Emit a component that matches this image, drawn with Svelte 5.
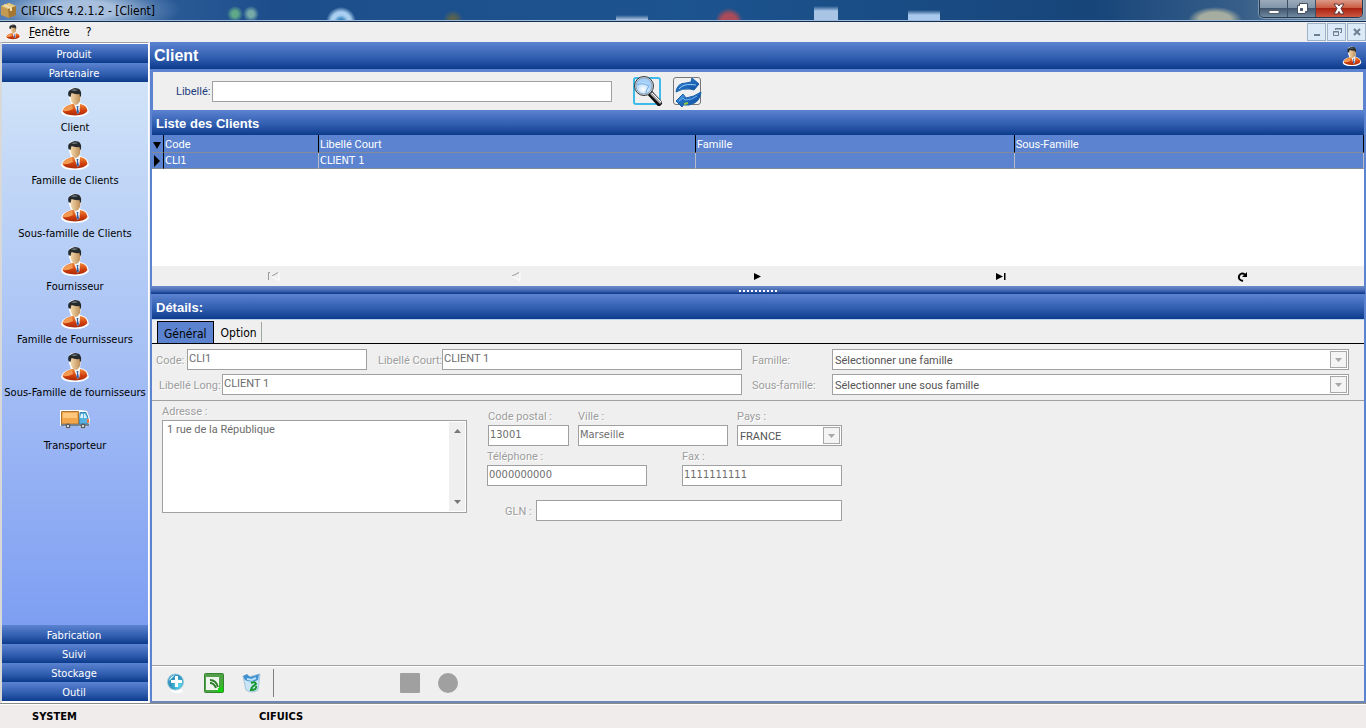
<script>
  const partners = [
    'Client',
    'Famille de Clients',
    'Sous-famille de Clients',
    'Fournisseur',
    'Famille de Fournisseurs',
    'Sous-Famille de fournisseurs',
    'Transporteur'
  ];
  const lowerGroups = ['Fabrication', 'Suivi', 'Stockage', 'Outil'];
  let search = $state('');
  let tab = $state('Général');
</script>

{#snippet person(size)}
  <svg width={size} height={size} viewBox="0 0 30 30" aria-hidden="true">
    <path d="M9 3Q15-2 21 4L21 9 20 16Q28 17 29 25Q26 30 15 30Q2 30 1 25Q2 19 11 17L9 11Z" fill="#fff" />
    <path d="M2.500 24Q4 19 12 17L20 17Q27 18 27.500 24Q25 28 15 28.500Q4 28 2.500 24Z" fill="url(#coat)" />
    <path d="M3 23Q5 19 12 18L13 22Q7 25 3 24Z" fill="#f29a52" />
    <path d="M14 17L20 17 19.500 25 17.500 27Z" fill="#f4f7fb" />
    <path d="M16.500 19L18.500 19 18 21 19 25 18 27 16.500 25 17 21Z" fill="#3262a8" />
    <path d="M10 6Q10 2 16 2Q21 3 20.500 9L20 14Q18 18 15.500 18Q12 17 11 13Z" fill="url(#skin)" />
    <path d="M8.500 9Q7 4 11 2.500Q14 0 18 1.500Q22 3 21 9L20 10 19.500 7Q15 7.500 11.500 6L10.500 10Z" fill="#252a2d" />
    <path d="M11 3.500Q14 1.500 18 3Q15 4.500 11 3.500Z" fill="#6c7478" />
  </svg>
{/snippet}

{#snippet truck()}
  <svg width="30" height="30" viewBox="0 0 30 30" aria-hidden="true">
    <path d="M0 5H20L27 6 30 14 29 21H27L23 24 19 21H11L8 24 4 21H0Z" fill="#fff" />
    <path d="M1.500 6.500H18.500V19H1.500Z" fill="#f3a54c" stroke="#a97637" />
    <path d="M3 8H17V13H3Z" fill="#ffc77e" />
    <path d="M20 7.500H26L28 13V19H19.500Z" fill="#58b2e1" stroke="#3987b7" />
    <path d="M21 9H23V13H20ZM24 9H25L27 13H24Z" fill="#dbf5ff" />
    <path d="M1 20H29" stroke="#77818a" stroke-width="2" />
    <circle cx="8" cy="21" r="2.500" fill="#555e64" /><circle cx="8" cy="21" r="1" fill="#fff" />
    <circle cx="23" cy="21" r="2.500" fill="#555e64" /><circle cx="23" cy="21" r="1" fill="#fff" />
    <path d="M28 14V18" stroke="#f37945" stroke-width="2" />
  </svg>
{/snippet}

{#snippet combo(id, value)}
  <span class="combo">
    <select {id} disabled><option>{value}</option></select>
    <span class="drop"><svg width="7" height="4" viewBox="0 0 7 4"><path d="M0 0H7L3.500 4Z" fill="#a8a8a8" /></svg></span>
  </span>
{/snippet}

<svg class="defs" width="0" height="0" aria-hidden="true">
  <defs>
    <linearGradient id="coat" x1="0" y1="0" x2="0" y2="1"><stop stop-color="#f08a3c" /><stop offset=".6" stop-color="#cf3d0c" /><stop offset="1" stop-color="#a82a08" /></linearGradient>
    <linearGradient id="skin"><stop stop-color="#f8dcae" /><stop offset="1" stop-color="#bd8d58" /></linearGradient>
    <linearGradient id="blue" x1="0" y1="0" x2="1" y2="1"><stop stop-color="#7cc4f0" /><stop offset=".4" stop-color="#2470c4" /><stop offset="1" stop-color="#0c4594" /></linearGradient>
    <radialGradient id="lens" cx=".45" cy=".7"><stop stop-color="#fff" /><stop offset="1" stop-color="#a5cff8" /></radialGradient>
    <radialGradient id="orb" cx=".7" cy=".7"><stop stop-color="#5bdcf3" /><stop offset="1" stop-color="#2f93bd" /></radialGradient>
    <linearGradient id="leaf" x1="0" y1="0" x2="1" y2="1"><stop stop-color="#5b9c52" /><stop offset=".6" stop-color="#4ca344" /><stop offset="1" stop-color="#12d60a" /></linearGradient>
  </defs>
</svg>

<div class="window">
  <header class="titlebar">
    <svg class="box" width="17" height="17" viewBox="0 0 17 17" aria-hidden="true">
      <path d="M1 4L9 1 16 4V13L9 16 1 13Z" fill="#c49a50" /><path d="M1 4L9 1 16 4 8 7Z" fill="#e5ca84" /><path d="M8 7L16 4V13L9 16Z" fill="#a37731" /><path d="M4 3L11 6V9" fill="none" stroke="#f0dca6" stroke-width="2" />
    </svg>
    <span class="caption">CIFUICS 4.2.1.2 - [Client]</span>
    <div class="controls">
      <button aria-label="Réduire"><svg width="12" height="13" viewBox="0 0 12 13"><path d="M1 8.500H11V11.500H1Z" fill="#fff" stroke="#56616d" /></svg></button>
      <button aria-label="Restaurer"><svg width="12" height="13" viewBox="0 0 12 13"><path d="M3.500 1.500H11.500V9.500H9.500V11.500H1.500V3.500H3.500Z" fill="#fff" stroke="#46515f" /><path d="M4.500 6.500H6.500V8.500H4.500Z" fill="#4a6280" stroke="#46515f" /></svg></button>
      <button class="close" aria-label="Fermer"><svg width="14" height="12" viewBox="0 0 14 12"><path d="M2 1H5.500L7 3 8.500 1H12L9 5.500 12 11H8.500L7 8.500 5.500 11H2L5 5.500Z" fill="#fff" stroke="#5d3535" /></svg></button>
    </div>
  </header>

  <nav class="menubar" aria-label="Menu">
    {@render person(16)}
    <button><u>F</u>enêtre</button>
    <button>?</button>
    <div class="mdi">
      <button aria-label="Réduire la fiche"><svg width="10" height="10" viewBox="0 0 10 10"><path d="M2 7H8V9H2Z" fill="#6e7f91" /></svg></button>
      <button aria-label="Restaurer la fiche"><svg width="10" height="10" viewBox="0 0 10 10"><path d="M3.500 3V1.500H9.500V5.500H8M3 2H10" fill="none" stroke="#6e7f91" /><path d="M1.500 4.500H6.500V8.500H1.500ZM1 5H7" fill="none" stroke="#6e7f91" /></svg></button>
      <button aria-label="Fermer la fiche"><svg width="10" height="10" viewBox="0 0 10 10"><path d="M2 2L8 8M8 2L2 8" stroke="#6e7f91" stroke-width="2" /></svg></button>
    </div>
  </nav>

  <div class="body">
    <aside>
      <button class="group">Produit</button>
      <button class="group">Partenaire</button>
      <div class="items">
        {#each partners as name}
          <button class="item">
            {#if name === 'Transporteur'}{@render truck()}{:else}{@render person(30)}{/if}
            <span>{name}</span>
          </button>
        {/each}
      </div>
      {#each lowerGroups as name}
        <button class="group">{name}</button>
      {/each}
    </aside>

    <main>
      <div class="heading">
        <h1>Client</h1>
        {@render person(20)}
      </div>

      <form class="filter" onsubmit={(e) => e.preventDefault()}>
        <label for="search">Libellé:</label>
        <input id="search" bind:value={search} />
        <button class="find" aria-label="Rechercher">
          <svg width="30" height="30" viewBox="0 0 30 30">
            <path d="M18 17L29 29" stroke="#111" stroke-width="6" />
            <path d="M19 17L29 27" stroke="#a9a9ae" stroke-width="3" />
            <path d="M20 17L29 26" stroke="#fff" />
            <circle cx="12" cy="10" r="9.500" fill="#d7dce2" stroke="#32383d" />
            <circle cx="12" cy="10" r="8" fill="url(#lens)" stroke="#8fa6ba" />
            <path d="M5 9Q10 6 17 10Q14 14 14 17" fill="none" stroke="#6eaee9" />
          </svg>
        </button>
        <button aria-label="Actualiser">
          <svg width="28" height="30" viewBox="0 0 28 30">
            <path d="M2 14Q3 5 12 5L17 4 18 0 25 6 20 12 16 11Q8 10 2 14Z" fill="url(#blue)" stroke="#1860a9" />
            <path d="M5 11Q9 6 17 6.500L22 7" fill="none" stroke="#8fcdf5" />
            <path d="M27 14Q26 25 15 27L9 27 8 29 2 23 9 16 12 20Q20 19 27 14Z" fill="url(#blue)" stroke="#1860a9" />
            <path d="M5 23L9 20 11 22Q18 22 23 18" fill="none" stroke="#6fb4ea" />
            <path d="M10 26L14 25" stroke="#8dc83d" stroke-width="2" />
          </svg>
        </button>
      </form>

      <section class="list">
        <h2>Liste des Clients</h2>
        <div class="grid">
          <table>
            <colgroup><col class="mark" /><col class="code" /><col class="short" /><col class="family" /><col /></colgroup>
            <thead>
              <tr>
                <th><svg width="8" height="8" viewBox="0 0 8 8"><path d="M0 1H8L4 8Z" /></svg></th>
                <th>Code</th><th>Libellé Court</th><th>Famille</th><th>Sous-Famille</th>
              </tr>
            </thead>
            <tbody>
              <tr>
                <td><svg width="8" height="12" viewBox="0 0 8 12"><path d="M1 0L7 6 1 12Z" /></svg></td>
                <td>CLI1</td><td>CLIENT 1</td><td></td><td></td>
              </tr>
            </tbody>
          </table>
        </div>
        <div class="pager">
          <button disabled aria-label="Premier"><svg width="13" height="9" viewBox="0 0 13 9"><path d="M3 .5H1.500V8M11 .5L5 4" fill="none" stroke="#999" /><path d="M5 4.500L12 8.500V1" fill="none" stroke="#fff" /></svg></button>
          <button disabled aria-label="Précédent"><svg width="13" height="9" viewBox="0 0 13 9"><path d="M10 .5L3 4" fill="none" stroke="#999" /><path d="M3 4.500L11 8.500V1" fill="none" stroke="#fff" /></svg></button>
          <button aria-label="Suivant"><svg width="13" height="9" viewBox="0 0 13 9"><path d="M3 1L10 4.500 3 8Z" /></svg></button>
          <button aria-label="Dernier"><svg width="13" height="9" viewBox="0 0 13 9"><path d="M2 1L9 4.500 2 8ZM10 1H11.500V8H10Z" /></svg></button>
          <button aria-label="Rafraîchir"><svg width="11" height="11" viewBox="0 0 11 11"><path d="M6 10Q1 9 2 5Q4 1 8 3.500" fill="none" stroke="#000" stroke-width="2" /><path d="M10 1V6H5Z" /></svg></button>
        </div>
      </section>

      <div class="splitter"><span></span></div>

      <section class="details">
        <h2>Détails:</h2>
        <div class="tabs" role="tablist">
          {#each ['Général', 'Option'] as name}
            <button role="tab" aria-selected={tab === name} class:active={tab === name} onclick={() => (tab = name)}>{name}</button>
          {/each}
        </div>

        <div class="identity">
          <div class="names">
            <div class="line">
              <label for="code">Code:</label>
              <input id="code" class="codebox" value="CLI1" disabled />
              <label class="second" for="short">Libellé Court:</label>
              <input id="short" class="grow" value="CLIENT 1" disabled />
            </div>
            <div class="line">
              <label class="indent" for="long">Libellé Long:</label>
              <input id="long" class="grow" value="CLIENT 1" disabled />
            </div>
          </div>
          <div class="families">
            <label for="family">Famille:</label>
            {@render combo('family', 'Sélectionner une famille')}
            <label for="subfamily">Sous-famille:</label>
            {@render combo('subfamily', 'Sélectionner une sous famille')}
          </div>
        </div>

        <div class="contact">
          <div class="address">
            <label for="address">Adresse :</label>
            <div class="memo">
              <textarea id="address" disabled>1 rue de la République</textarea>
              <div class="scroll">
                <svg width="7" height="4" viewBox="0 0 7 4"><path d="M0 4L3.500 0 7 4Z" fill="#777" /></svg>
                <svg width="7" height="4" viewBox="0 0 7 4"><path d="M0 0L3.500 4 7 0Z" fill="#777" /></svg>
              </div>
            </div>
          </div>
          <div class="place">
            <div class="trio">
              <div><label for="zip">Code postal :</label><input id="zip" class="wide-face" value="13001" disabled /></div>
              <div><label for="city">Ville :</label><input id="city" class="wide-face" value="Marseille" disabled /></div>
              <div><label for="country">Pays :</label>{@render combo('country', 'FRANCE')}</div>
            </div>
            <div class="duo">
              <div><label for="phone">Téléphone :</label><input id="phone" class="wide-face" value="0000000000" disabled /></div>
              <div><label for="fax">Fax :</label><input id="fax" class="wide-face" value="1111111111" disabled /></div>
            </div>
            <div class="gln"><label for="gln">GLN :</label><input id="gln" class="grow" disabled /></div>
          </div>
        </div>

        <div class="toolbar">
          <button aria-label="Ajouter">
            <svg width="20" height="20" viewBox="0 0 20 20"><ellipse cx="11" cy="18" rx="6" ry="2" fill="#fff" /><circle cx="9.500" cy="9" r="8" fill="url(#orb)" stroke="#9ccbd9" /><path d="M9 3H12V7H16V10H12V14H9V10H5V7H9Z" fill="#fff" /><path d="M3 8Q4 3 9 2L5 6Z" fill="#d9f7ff" /></svg>
          </button>
          <button aria-label="Modifier">
            <svg width="20" height="20" viewBox="0 0 20 20"><rect x=".5" y=".5" width="19" height="19" rx="1" fill="url(#leaf)" stroke="#34862e" /><rect x="2" y="4" width="13" height="13" fill="#eff5ed" /><path d="M6 7Q12 7 14 14M6 10Q10 10 12 15" fill="none" stroke="#317e2c" stroke-width="2" /><path d="M14 15H19V19H14Z" fill="#14d50b" /></svg>
          </button>
          <button aria-label="Supprimer">
            <svg width="20" height="20" viewBox="0 0 20 20"><path d="M1 3L5 4 10 3 18 1 16 17Q10 21 4 17Z" fill="#c9e6f7" stroke="#a4c4da" /><path d="M1 3L5 1 8 4 12 3 17 1 16 7Q9 10 3 7Z" fill="#4390cf" /><path d="M5 6L10 7 14 5" fill="none" stroke="#bce2fa" stroke-width="2" /><path d="M9 10Q13 8 14 11L10 14M14 13Q15 17 9 17L10 14" fill="none" stroke="#15972b" stroke-width="2" /></svg>
          </button>
          <span class="rule"></span>
          <button class="stub" disabled aria-label="Enregistrer"><svg width="20" height="20" viewBox="0 0 20 20"><rect width="20" height="20" rx="1" fill="#a0a0a0" /></svg></button>
          <button disabled aria-label="Annuler"><svg width="20" height="20" viewBox="0 0 20 20"><circle cx="10" cy="10" r="10" fill="#a0a0a0" /></svg></button>
        </div>
      </section>
    </main>
  </div>

  <footer><span>SYSTEM</span><span>CIFUICS</span></footer>
</div>

<style>
  :global(body) { margin: 0; }
  * { box-sizing: border-box; }
  .defs { position: absolute; }
  svg { display: block; flex: none; }
  button { font: inherit; color: inherit; border: 0; padding: 0; margin: 0; background: none; }
  h1, h2 { margin: 0; color: #fff; font-family: "Liberation Sans", Arial, sans-serif; }

  .window {
    --bar: linear-gradient(#5b83d1, #2f5cae 60%, #0d3b8c);
    --tahoma: "DejaVu Sans Condensed", Tahoma, sans-serif;
    --sans: Roboto, "Liberation Sans", sans-serif;
    min-height: 100vh;
    display: flex;
    flex-direction: column;
    font: 11px/14px var(--tahoma);
    color: #000;
    background: #efefef;
  }

  .titlebar {
    height: 22px;
    display: flex;
    gap: 4px;
    border-bottom: 1px solid #142c4c;
    box-shadow: inset 0 -1px #9fbbdc;
    background:
      radial-gradient(ellipse 100px 26px at 80px 10px, #b7cce6e0 35%, #8eaed455 75%, transparent),
      radial-gradient(circle at 235px 14px, #5fa988 3px, transparent 8px),
      radial-gradient(circle at 251px 14px, #76aaa9 3px, transparent 8px),
      radial-gradient(circle at 341px 22px, #3a84bd 3px, #a8cff0 7px, #a8cff0 10px, transparent 15px),
      radial-gradient(circle at 453px 20px, #59634f 3px, transparent 10px),
      linear-gradient(#b3c5e000, #b3c5e0 5px) 616px 15px / 32px 12px no-repeat,
      radial-gradient(circle at 729px 22px, #a94b58 8px, transparent 14px),
      linear-gradient(#a9c5e500, #a9c5e5 5px) 814px 6px / 24px 16px no-repeat,
      linear-gradient(#a9c8ed00, #a9c8ed 5px) 908px 10px / 32px 12px no-repeat,
      radial-gradient(ellipse 27px 13px at 1215px 20px, #a4ad9f 60%, transparent),
      linear-gradient(90deg, #416fa8, #1d4e8b 20%, #1c548f 50%, #17457a 80%, #385f89 91%, #8397ac);
  }
  .box { margin-top: 2px; }
  .caption { font-size: 12px; line-height: 22px; }
  .controls { margin-left: auto; margin-right: 3px; display: flex; height: 18px; border: 1px solid #25394f; border-top: 0; border-radius: 0 0 5px 5px; box-shadow: 0 0 0 1px #b9c7d580; overflow: hidden; }
  .controls button { width: 28px; display: grid; place-items: center; border-right: 1px solid #3b4f65; background: linear-gradient(#9cabba, #8195aa 45%, #41566d 50%, #7189a2); }
  .controls .close { width: 46px; border: 0; background: linear-gradient(#dc9a87, #cc5d45 45%, #aa2210 50%, #cc5942); }

  .menubar { height: 20px; display: flex; align-items: center; padding-left: 5px; font-size: 12px; }
  .menubar > button { padding: 0 8px; }
  .mdi { margin-left: auto; display: flex; gap: 1px; }
  .mdi button { width: 19px; height: 18px; display: grid; place-items: center; border: 1px solid #9eb2c8; background: #dce9f7; }

  .body { flex: 1; display: flex; min-height: 0; }
  aside { width: 149px; flex: none; display: flex; flex-direction: column; padding: 1px 0 1px 0; border: 1px solid #fff; border-left: 2px solid #d8d8d8; border-top-color: #a0a0a0; background: #fff; }
  .group { height: 19px; flex: none; padding: 2px 2px 0 0; color: #fff; background: var(--bar); }
  .items { flex: 1; padding-top: 5px; background: linear-gradient(#d0e3f8, #7e9ef2); }
  .item { width: 100%; height: 53px; display: flex; flex-direction: column; align-items: center; gap: 3px; white-space: nowrap; }
  .item span { line-height: 16px; }

  main { flex: 1; min-width: 0; display: flex; flex-direction: column; margin-left: 1px; padding: 0 2px; border-bottom: 2px solid #6c86b8; background: #5b83cf; }
  .heading { height: 27px; margin: 0 -2px; padding: 0 4px; display: flex; align-items: center; justify-content: space-between; background: var(--bar); }
  h1 { font-size: 16px; line-height: 20px; }
  h2 { height: 25px; padding-left: 4px; font-size: 13px; line-height: 27px; background: var(--bar); }

  input, textarea, select { border: 1px solid #a0a0a0; border-radius: 0; background: #fff; color: #6d6d6d; opacity: 1; margin: 0; outline: 0; }
  input, select { height: 21px; }
  input { padding: 0 1px 3px; min-width: 0; }
  label, input, select, textarea, table { font: 11px/14px var(--sans); }
  label { line-height: 16px; }
  .wide-face { font-family: var(--tahoma); }
  .grow { flex: 1; }

  .filter { height: 38px; margin: 3px 1px 0; padding-left: 23px; display: flex; align-items: center; background: #efefef; }
  .filter label { width: 36px; padding-top: 2px; color: #1a3c7c; white-space: nowrap; }
  .filter input { width: 400px; color: #000; }
  .filter button { width: 28px; height: 28px; margin-left: 12px; display: grid; place-items: center; border: 1px solid #777; border-radius: 3px; background: #f0f0f0; }
  .filter .find { margin-left: 21px; border: 2px solid #3ebbe8; place-content: center; }

  .grid { height: 131px; background: #fff; }
  table { width: 100%; table-layout: fixed; border-collapse: separate; border-spacing: 0; color: #fff; background: #5b83cf; }
  .mark { width: 12px; } .code { width: 155px; } .short { width: 31.1%; } .family { width: 26.3%; }
  th, td { padding: 1px 1px 0; text-align: left; font-weight: 400; border-right: 1px solid #000; border-bottom: 1px solid #858b99; white-space: nowrap; }
  th { height: 18px; padding-top: 2px; } td { height: 15px; line-height: 14px; font-family: var(--tahoma); }
  td + td { border-right-color: #b8bdc6; }
  .pager { height: 20px; display: grid; grid-template-columns: repeat(5, 1fr); background: #efefef; }
  .pager button { display: grid; place-items: center; }
  .splitter { height: 8px; margin: 0 -1px; padding-top: 4px; background: linear-gradient(#6f8cc9, #4569b4 55%, #0c3889); }
  .splitter span { display: block; width: 38px; height: 2px; margin: auto; background: repeating-linear-gradient(90deg, #fff 0 2px, transparent 2px 4px); }

  .details { flex: 1; display: flex; flex-direction: column; background: #efefef; }
  .tabs { height: 25px; padding: 1px 0 0 5px; display: flex; border-top: 1px solid #b9d2f0; border-bottom: 1px solid #000; font-size: 12px; }
  .tabs button { padding: 2px 6px 0; }
  .tabs button:last-child { height: 20px; align-self: center; border-right: 1px solid #a0a89c; padding: 1px 4px 0 7px; }
  .tabs .active { padding: 2px 6px 0; border: 1px solid #000; border-bottom: 0; background: #5b83cf; }

  .details label { color: #9d9d9d; text-shadow: 1px 1px #fff; white-space: nowrap; }
  .identity { display: flex; gap: 10px; padding: 5px 15px 5px 4px; border-bottom: 1px solid #a0a0a0; }
  .names { width: 586px; display: grid; gap: 4px; }
  .line { display: flex; align-items: center; }
  .line label { width: 31px; }
  .line .second { width: 64px; margin-left: 11px; }
  .line .indent { width: 63px; margin-left: 3px; }
  .codebox { width: 180px; }
  .families { flex: 1; display: grid; grid-template-columns: 80px 1fr; gap: 4px 0; align-items: center; }
  .identity label, .gln label { padding-top: 2px; }
  .combo { position: relative; display: block; }
  select { width: 100%; display: block; appearance: none; padding: 2px 20px 0 2px; color: #555; }
  .drop { position: absolute; right: 2px; top: 2px; width: 17px; height: 17px; display: grid; place-items: center; border: 1px solid #a8a8a8; background: #f4f4f4; pointer-events: none; }

  .contact { flex: 1; display: flex; gap: 20px; padding: 3px 10px; }
  .address { width: 305px; }
  .address label, .trio label, .duo label { display: block; }
  .memo { height: 93px; display: flex; border: 1px solid #a0a0a0; background: #fff; }
  .memo textarea { flex: 1; min-width: 0; border: 0; resize: none; overflow: hidden; padding: 2px 4px; }
  .scroll { width: 16px; margin: 1px; display: flex; flex-direction: column; justify-content: space-between; align-items: center; padding: 7px 0; background: #efefef; }
  .place { width: 355px; padding-top: 5px; }
  .trio { display: grid; grid-template-columns: 81px 150px 105px; justify-content: space-between; padding-left: 1px; }
  .duo { display: grid; grid-template-columns: 160px 160px; justify-content: space-between; padding-top: 3px; }
  .trio > div > *, .duo > div > * { width: 100%; }
  .gln { display: flex; align-items: center; margin: 14px 0 0 18px; }
  .gln label { width: 31px; }

  .toolbar { height: 36px; padding: 0 0 2px 14px; display: flex; align-items: center; gap: 18px; border-top: 1px solid #a0a0a0; box-shadow: inset 0 1px #fff; }
  .rule { width: 1px; height: 28px; margin-left: -7px; background: #808080; }
  .stub { margin-left: 108px; }

  footer { height: 25px; display: flex; padding: 2px 0 0 32px; align-items: center; border-top: 1px solid #8c8c8c; box-shadow: inset 0 1px #fff; background: #f0eceb; font-weight: 700; line-height: 24px; }
  footer span { width: 227px; }
</style>
